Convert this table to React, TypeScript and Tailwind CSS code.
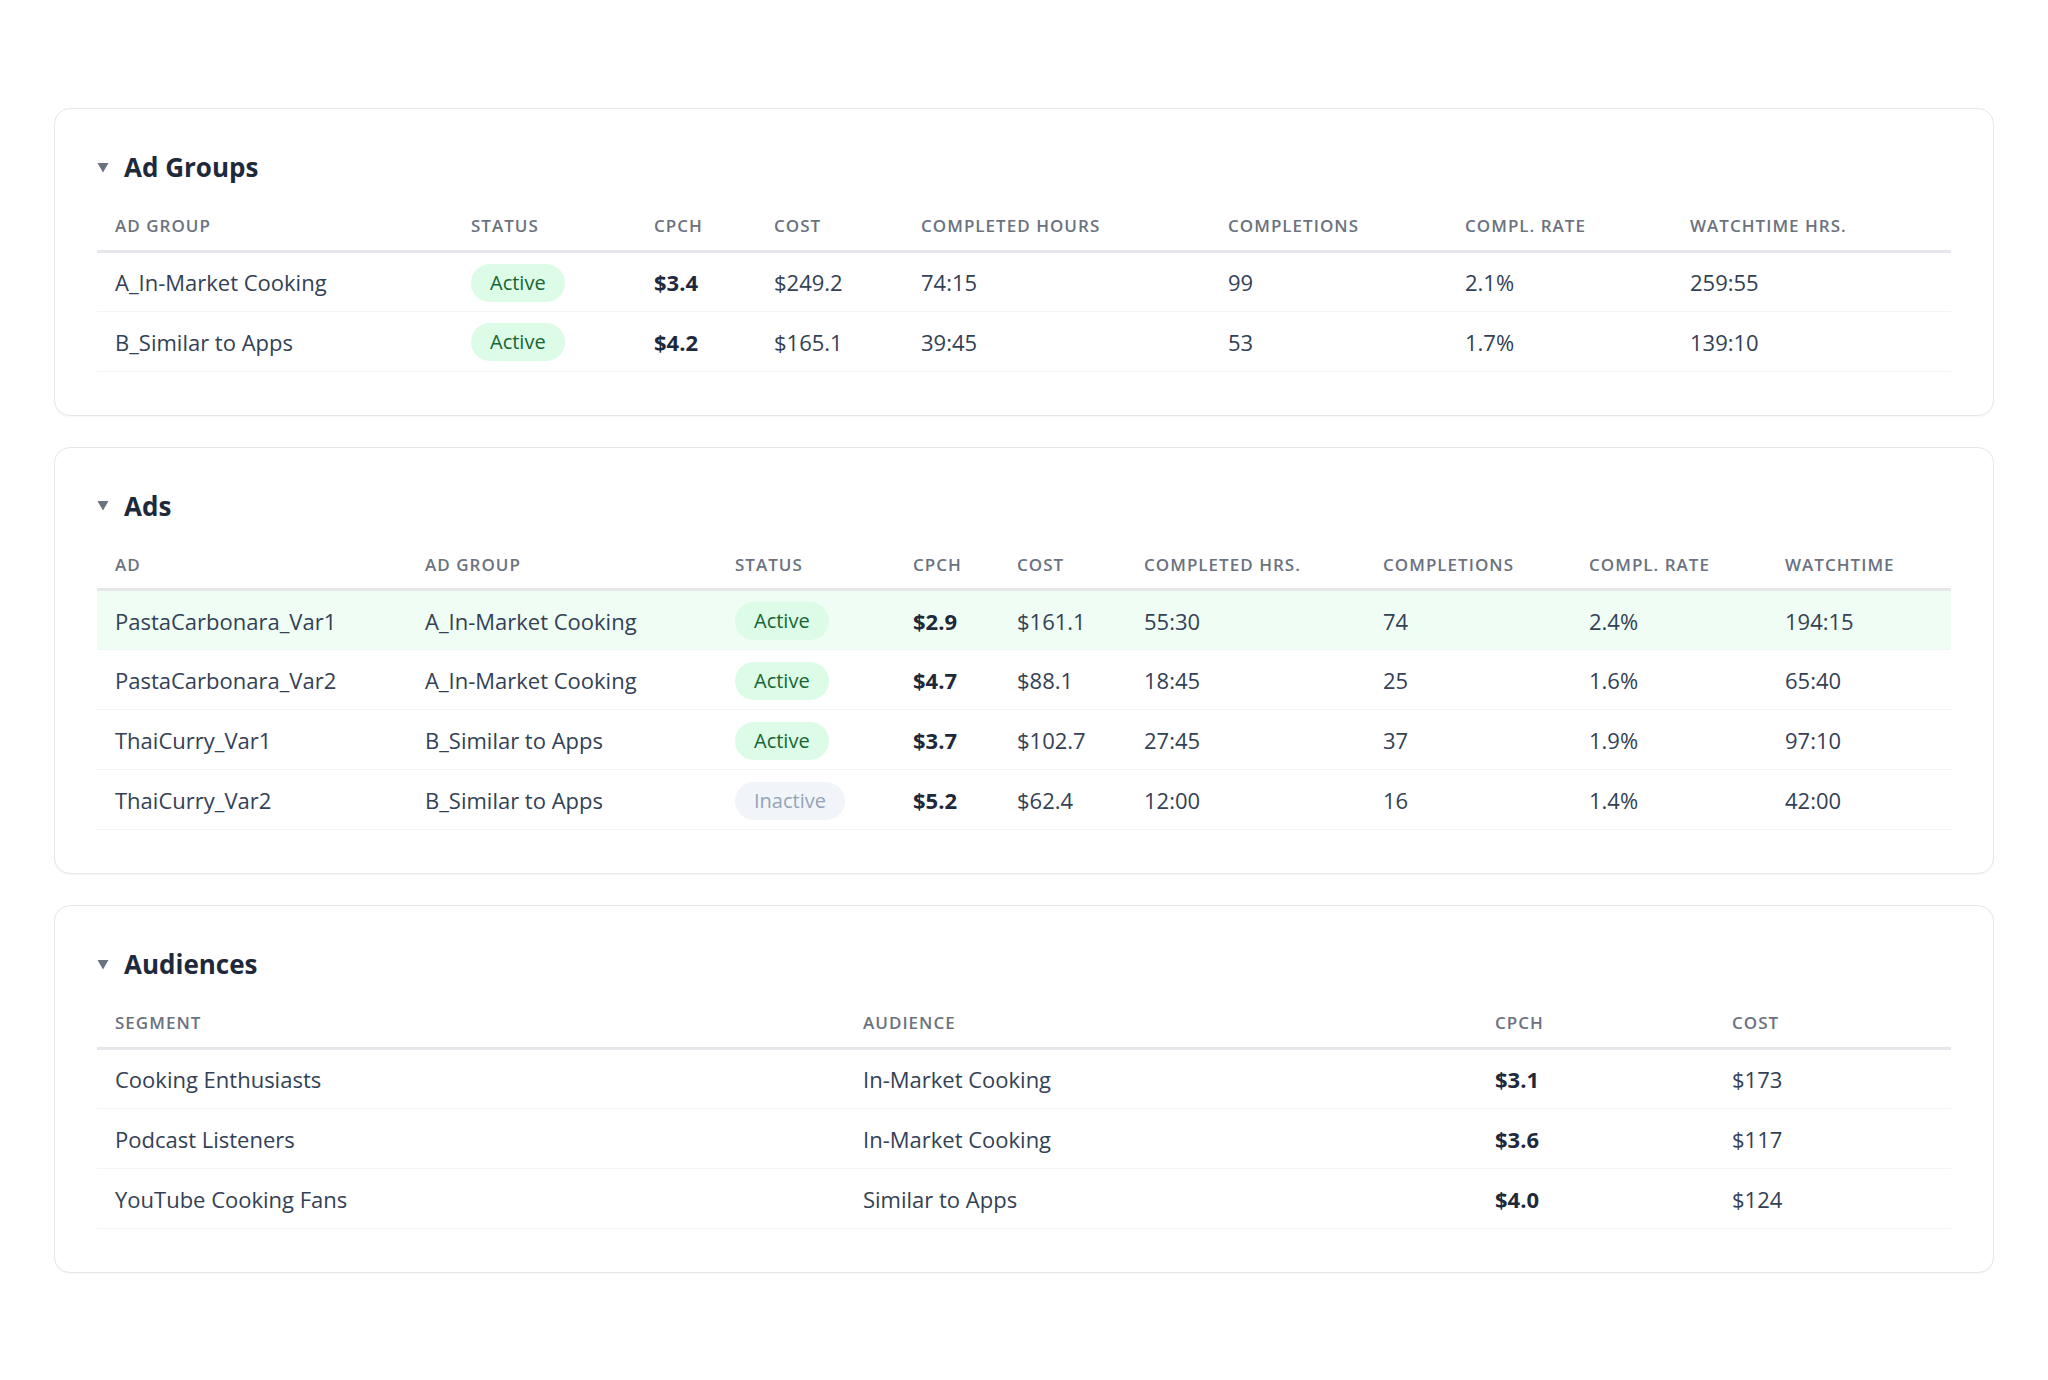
import React from "react";

type Col = { key: string; label: string; width: string };

const font = { fontFamily: '"Open Sans", "Noto Sans", sans-serif' };

function Badge({ status }: { status: "Active" | "Inactive" }) {
  return status === "Active" ? (
    <span className="inline-flex items-center h-[38px] px-[19px] rounded-full bg-[#dcfce7] text-[#166534] text-[20px]">
      Active
    </span>
  ) : (
    <span className="inline-flex items-center h-[38px] px-[19px] rounded-full bg-[#f1f5f9] text-[#94a3b8] text-[20px]">
      Inactive
    </span>
  );
}

function Caret() {
  return (
    <svg width="12" height="11" viewBox="0 0 12 11" className="shrink-0">
      <polygon points="0.5,1 11.5,1 6,10.5" fill="#6b7280" />
    </svg>
  );
}

function Section({
  title,
  cols,
  rows,
  highlight,
}: {
  title: string;
  cols: Col[];
  rows: React.ReactNode[][];
  highlight?: number;
}) {
  return (
    <section className="rounded-2xl border border-[#e5e7eb] bg-white shadow-[0_1px_2px_rgba(0,0,0,0.04)] px-[42px] pt-[40px] pb-[43px]">
      {/* Section header */}
      <div className="flex items-center gap-[15px] h-[36px]">
        <Caret />
        <h2 className="text-[26px] font-bold text-[#1e293b] leading-none">{title}</h2>
      </div>

      <table className="w-full table-fixed border-collapse mt-[16px]">
        <colgroup>
          {cols.map((c) => (
            <col key={c.key} className={c.width} />
          ))}
        </colgroup>
        <thead>
          <tr className="h-[50px] border-b-[3px] border-[#e5e7eb]">
            {cols.map((c) => (
              <th
                key={c.key}
                className="pl-[18px] pt-[1px] text-left align-middle text-[17px] font-semibold uppercase tracking-[0.06em] text-[#6b7280]"
              >
                {c.label}
              </th>
            ))}
          </tr>
        </thead>
        <tbody>
          {rows.map((r, i) => (
            <tr
              key={i}
              className={
                "h-[60px] border-b border-[#f1f3f5] " + (highlight === i ? "bg-[#f0fdf4]" : "")
              }
            >
              {r.map((cell, j) => (
                <td key={j} className="pl-[18px] pt-[2px] align-middle text-[22px] text-[#334155] whitespace-nowrap">
                  {cell}
                </td>
              ))}
            </tr>
          ))}
        </tbody>
      </table>
    </section>
  );
}

const B = ({ children }: { children: React.ReactNode }) => (
  <span className="font-bold text-[#1e293b]">{children}</span>
);

export default function App() {
  const adGroupCols: Col[] = [
    { key: "g", label: "Ad Group", width: "w-[356px]" },
    { key: "s", label: "Status", width: "w-[183px]" },
    { key: "c", label: "CPCH", width: "w-[120px]" },
    { key: "co", label: "Cost", width: "w-[147px]" },
    { key: "h", label: "Completed Hours", width: "w-[307px]" },
    { key: "n", label: "Completions", width: "w-[237px]" },
    { key: "r", label: "Compl. Rate", width: "w-[225px]" },
    { key: "w", label: "Watchtime Hrs.", width: "w-auto" },
  ];
  const adGroupRows = [
    ["A_In-Market Cooking", <Badge status="Active" />, <B>$3.4</B>, "$249.2", "74:15", "99", "2.1%", "259:55"],
    ["B_Similar to Apps", <Badge status="Active" />, <B>$4.2</B>, "$165.1", "39:45", "53", "1.7%", "139:10"],
  ];

  const adCols: Col[] = [
    { key: "a", label: "Ad", width: "w-[310px]" },
    { key: "g", label: "Ad Group", width: "w-[310px]" },
    { key: "s", label: "Status", width: "w-[178px]" },
    { key: "c", label: "CPCH", width: "w-[104px]" },
    { key: "co", label: "Cost", width: "w-[127px]" },
    { key: "h", label: "Completed Hrs.", width: "w-[239px]" },
    { key: "n", label: "Completions", width: "w-[206px]" },
    { key: "r", label: "Compl. Rate", width: "w-[196px]" },
    { key: "w", label: "Watchtime", width: "w-auto" },
  ];
  const adRows = [
    ["PastaCarbonara_Var1", "A_In-Market Cooking", <Badge status="Active" />, <B>$2.9</B>, "$161.1", "55:30", "74", "2.4%", "194:15"],
    ["PastaCarbonara_Var2", "A_In-Market Cooking", <Badge status="Active" />, <B>$4.7</B>, "$88.1", "18:45", "25", "1.6%", "65:40"],
    ["ThaiCurry_Var1", "B_Similar to Apps", <Badge status="Active" />, <B>$3.7</B>, "$102.7", "27:45", "37", "1.9%", "97:10"],
    ["ThaiCurry_Var2", "B_Similar to Apps", <Badge status="Inactive" />, <B>$5.2</B>, "$62.4", "12:00", "16", "1.4%", "42:00"],
  ];

  const audCols: Col[] = [
    { key: "s", label: "Segment", width: "w-[748px]" },
    { key: "a", label: "Audience", width: "w-[632px]" },
    { key: "c", label: "CPCH", width: "w-[237px]" },
    { key: "co", label: "Cost", width: "w-auto" },
  ];
  const audRows = [
    ["Cooking Enthusiasts", "In-Market Cooking", <B>$3.1</B>, "$173"],
    ["Podcast Listeners", "In-Market Cooking", <B>$3.6</B>, "$117"],
    ["YouTube Cooking Fans", "Similar to Apps", <B>$4.0</B>, "$124"],
  ];

  return (
    <div className="min-h-screen bg-white px-[54px] pt-[108px] pb-[100px]" style={font}>
      <div className="flex flex-col gap-[31px]">
        <Section title="Ad Groups" cols={adGroupCols} rows={adGroupRows} />
        <Section title="Ads" cols={adCols} rows={adRows} highlight={0} />
        <Section title="Audiences" cols={audCols} rows={audRows} />
      </div>
    </div>
  );
}
